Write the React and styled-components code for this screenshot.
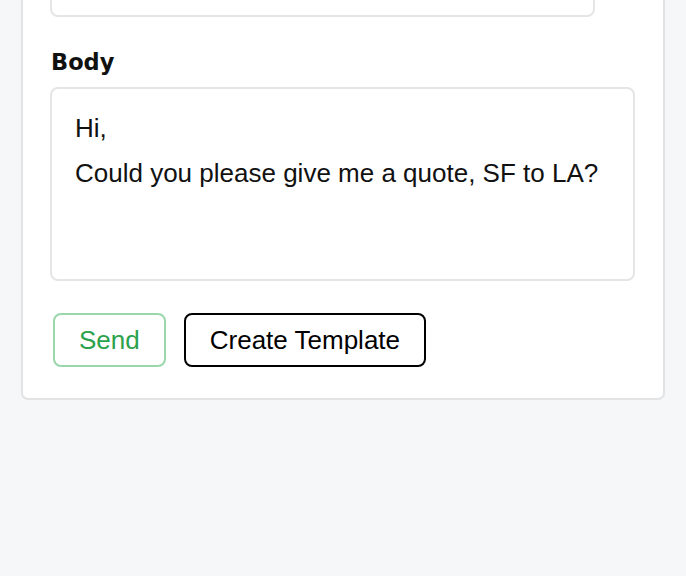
import React, { useLayoutEffect, useRef, useState } from "react";
import styled, { createGlobalStyle } from "styled-components";

const GlobalStyle = createGlobalStyle`
  html, body {
    margin: 0;
    padding: 0;
    background: #f6f7f9;
  }
  body {
    font-family: "Liberation Sans", Arial, sans-serif;
    color: #111;
  }
  * {
    box-sizing: border-box;
  }
`;

const Page = styled.div`
  padding: 21px 21px 220px;
`;

const Card = styled.form`
  background: #fff;
  border: 2px solid #e2e3e5;
  border-radius: 7px;
  padding: 27px 28px 31px 27px;
  display: flex;
  flex-direction: column;
`;

const Field = styled.div`
  display: flex;
  flex-direction: column;
  margin-bottom: 32px;
`;

const Label = styled.label`
  font-family: "DejaVu Sans", sans-serif;
  font-weight: bold;
  font-size: 22.5px;
  color: #111;
  margin: 0 0 12px 1px;
`;

const Input = styled.input`
  width: 545px;
  height: 72px;
  border: 2px solid #e4e5e7;
  border-radius: 8px;
  padding: 0 23px 18px;
  font-family: "Liberation Sans", Arial, sans-serif;
  font-size: 26px;
  color: #111;
  outline: none;
`;

const BodyArea = styled.textarea`
  width: 100%;
  height: 194px;
  border: 2px solid #e4e5e7;
  border-radius: 8px;
  padding: 17px 23px;
  font-family: "Liberation Sans", Arial, sans-serif;
  font-size: 26px;
  line-height: 45px;
  color: #111;
  resize: none;
  overflow: hidden;
  outline: none;
`;

const Actions = styled.div`
  display: flex;
  gap: 18px;
  padding-left: 3px;
`;

const Button = styled.button`
  font-family: "Liberation Sans", Arial, sans-serif;
  font-size: 26px;
  line-height: 30px;
  padding: 10px 24px;
  background: #fff;
  border-radius: 8px;
  border: 2px solid ${props => (props.variant === "success" ? "#9bd7ab" : "#000")};
  color: ${props => (props.variant === "success" ? "#2ba24c" : "#000")};
  cursor: pointer;
`;

const App = () => {
  const [to, setTo] = useState("dispatch@freightco.com");
  const [subject, setSubject] = useState("Quote request");
  const [body, setBody] = useState(
    "Hi,\nCould you please give me a quote, SF to LA?"
  );
  const bodyRef = useRef(null);

  // the view is scrolled so the Body field sits near the top
  useLayoutEffect(() => {
    const top = bodyRef.current.getBoundingClientRect().top + window.scrollY;
    window.scrollTo(0, top - 87);
  }, []);

  return (
    <Page>
      <GlobalStyle />
      <Card onSubmit={e => e.preventDefault()}>
        <Field>
          <Label htmlFor="to">To</Label>
          <Input id="to" value={to} onChange={e => setTo(e.target.value)} />
        </Field>
        <Field>
          <Label htmlFor="subject">Subject</Label>
          <Input
            id="subject"
            value={subject}
            onChange={e => setSubject(e.target.value)}
          />
        </Field>
        <Field>
          <Label htmlFor="body">Body</Label>
          <BodyArea
            id="body"
            ref={bodyRef}
            value={body}
            onChange={e => setBody(e.target.value)}
          />
        </Field>
        <Actions>
          <Button type="submit" variant="success">
            Send
          </Button>
          <Button type="button">Create Template</Button>
        </Actions>
      </Card>
    </Page>
  );
};

export default App;
